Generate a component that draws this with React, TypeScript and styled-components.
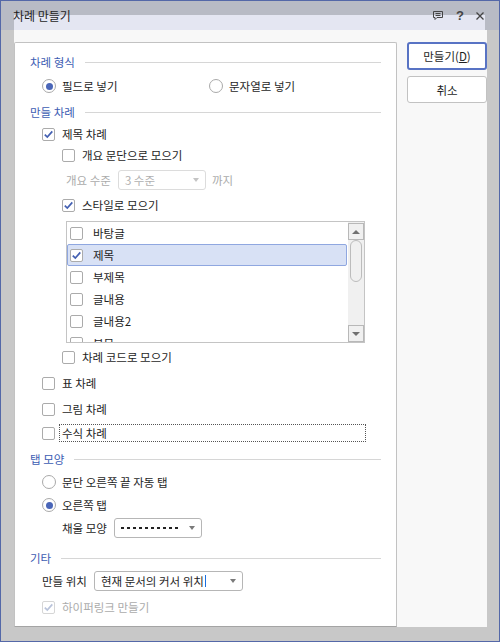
import React from 'react'
import styled, { createGlobalStyle } from 'styled-components'

const GlobalStyle = createGlobalStyle`
  html, body {
    margin: 0;
    padding: 0;
    background: #ffffff;
  }
  body {
    font-family: 'Noto Sans CJK KR', 'Noto Sans', sans-serif;
    font-size: 11.5px;
    color: #1e1e1e;
  }
  * {
    box-sizing: border-box;
  }
`

const Window = styled.div`
  width: 500px;
  height: 642px;
  border: 1px solid #5468a8;
  background: #c8c8c8;
  display: flex;
  flex-direction: column;
`

const TitleBar = styled.div`
  height: 29px;
  flex: none;
  display: flex;
  align-items: center;
  padding: 0 15px 0 12px;
  background:
    linear-gradient(#e4e6f2, #e4e6f2) 13px 14px / 471px 15px no-repeat,
    #b8bbc5;
`

const Title = styled.div`
  flex: 1;
  font-size: 12px;
  color: #1e1e1e;
`

const TitleControls = styled.div`
  display: flex;
  align-items: center;
  gap: 12px;
  color: #444;
`

const HelpMark = styled.span`
  font-family: 'Liberation Sans', sans-serif;
  font-weight: bold;
  font-size: 13px;
  line-height: 1;
`

const Frame = styled.div`
  flex: 1;
  display: flex;
  padding: 0 14px 14px 13px;
`

const Body = styled.div`
  flex: 1;
  display: flex;
  padding-top: 12px;
  background: #f8f8f8;
`

const Panel = styled.div`
  width: 383px;
  flex: none;
  background: #ffffff;
  border: 1px solid #c2c2c2;
  border-bottom-color: #a4a4a4;
  border-radius: 2px 2px 0 0;
  padding: 9px 15px 0 15px;
`

const ButtonColumn = styled.div`
  width: 80px;
  flex: none;
  margin-left: 10px;
  display: flex;
  flex-direction: column;
  gap: 6px;
`

const DialogButton = styled.button<{ $primary?: boolean }>`
  width: 80px;
  height: ${p => (p.$primary ? 28 : 27)}px;
  border: ${p => (p.$primary ? '2px solid #5873c4' : '1px solid #c2c2c2')};
  border-radius: 3px;
  background: #ffffff;
  font-family: inherit;
  font-size: 11.5px;
  color: #1e1e1e;
  padding: 0;
`

const SectionHeader = styled.div<{ $mt?: number }>`
  display: flex;
  align-items: center;
  gap: 10px;
  height: 20px;
  margin-top: ${p => p.$mt ?? 0}px;
  color: #3d5db3;
  &::after {
    content: '';
    flex: 1;
    height: 1px;
    background: #d6d6d6;
  }
`

const Row = styled.div<{ $indent: number; $mt: number }>`
  display: flex;
  align-items: center;
  height: 20px;
  margin-left: ${p => p.$indent}px;
  margin-top: ${p => p.$mt}px;
`

const Box = styled.span<{ $disabled?: boolean; $gap?: number }>`
  width: 13px;
  height: 13px;
  flex: none;
  border: 1px solid ${p => (p.$disabled ? '#d6d6d6' : '#ababab')};
  border-radius: 2px;
  background: #ffffff;
  display: inline-flex;
  align-items: center;
  justify-content: center;
  margin-right: ${p => p.$gap ?? 7}px;
`

const RadioCircle = styled.span<{ $on?: boolean }>`
  width: 14px;
  height: 14px;
  flex: none;
  border-radius: 50%;
  border: 1px solid #a9a9a9;
  background: #ffffff;
  display: inline-flex;
  align-items: center;
  justify-content: center;
  margin-right: 6px;
  &::after {
    content: '';
    width: 7px;
    height: 7px;
    border-radius: 50%;
    background: ${p => (p.$on ? '#4a66b8' : 'transparent')};
  }
`

const RadioOption = styled.label<{ $width?: number }>`
  display: flex;
  align-items: center;
  width: ${p => (p.$width ? `${p.$width}px` : 'auto')};
`

const Text = styled.span<{ $disabled?: boolean }>`
  color: ${p => (p.$disabled ? '#ababab' : '#1e1e1e')};
  white-space: nowrap;
`

const FocusLabel = styled.span`
  width: 307px;
  height: 18px;
  display: flex;
  align-items: center;
  padding-left: 2px;
  border: 1px dotted #555555;
`

const Combo = styled.div<{ $width: number; $disabled?: boolean }>`
  width: ${p => p.$width}px;
  height: 20px;
  flex: none;
  display: flex;
  align-items: center;
  padding: 0 6px 0 6px;
  margin: 0 6px 0 7px;
  border: 1px solid ${p => (p.$disabled ? '#dcdcdc' : '#b6b6b6')};
  border-radius: 3px;
  background: #ffffff;
  color: ${p => (p.$disabled ? '#b0b0b0' : '#1e1e1e')};
`

const ComboValue = styled.span`
  flex: 1;
  display: flex;
  align-items: center;
  white-space: nowrap;
`

const ComboArrow = styled.span<{ $disabled?: boolean }>`
  width: 0;
  height: 0;
  border-left: 3.5px solid transparent;
  border-right: 3.5px solid transparent;
  border-top: 4px solid ${p => (p.$disabled ? '#c4c4c4' : '#7a7a7a')};
`

const DashLine = styled.span`
  width: 60px;
  height: 2px;
  background: repeating-linear-gradient(90deg, #222 0 3px, transparent 3px 6px);
`

const Caret = styled.span`
  width: 1px;
  height: 12px;
  margin-left: 1px;
  background: #1a6fe0;
`

const ListBox = styled.div`
  margin: 6px 0 0 36px;
  width: 299px;
  height: 122px;
  border: 1px solid #c4c4c4;
  background: #ffffff;
  display: flex;
  overflow: hidden;
`

const ListItems = styled.div`
  flex: 1;
  display: flex;
  flex-direction: column;
  margin-right: 1px;
`

const ListItem = styled.div<{ $selected?: boolean }>`
  height: 22px;
  flex: none;
  display: flex;
  align-items: center;
  padding-left: 2px;
  border: 1px solid ${p => (p.$selected ? '#8fa7e0' : 'transparent')};
  border-radius: 2px;
  background: ${p => (p.$selected ? '#d8e1f5' : 'transparent')};
`

const ScrollBar = styled.div`
  width: 16px;
  flex: none;
  display: flex;
  flex-direction: column;
  padding-top: 1px;
  background: #f0f0f0;
`

const ScrollButton = styled.div`
  height: 17px;
  flex: none;
  border: 1px solid #b8b8b8;
  background: #f0f0f0;
  display: flex;
  align-items: center;
  justify-content: center;
`

const ScrollThumb = styled.div`
  height: 42px;
  margin: 0 2px;
  border: 1px solid #bcbcbc;
  border-radius: 6px;
  background: #f0f0f0;
`

const ScrollSpace = styled.div`
  flex: 1;
`

const Triangle = styled.span<{ $up?: boolean }>`
  width: 0;
  height: 0;
  border-left: 4px solid transparent;
  border-right: 4px solid transparent;
  ${p => (p.$up ? 'border-bottom: 4px solid #707070;' : 'border-top: 4px solid #707070;')}
`

function Check({ disabled }: { disabled?: boolean }) {
  return (
    <svg width="11" height="11" viewBox="0 0 11 11">
      <path
        d="M1.8 5.6 L4.3 8.1 L9.3 2.4"
        fill="none"
        stroke={disabled ? '#b9c3da' : '#4460b2'}
        strokeWidth="1.7"
      />
    </svg>
  )
}

function CheckBox({ checked, disabled, gap }: { checked?: boolean; disabled?: boolean; gap?: number }) {
  return (
    <Box $disabled={disabled} $gap={gap}>
      {checked && <Check disabled={disabled} />}
    </Box>
  )
}

function MessageIcon() {
  return (
    <svg width="12" height="11" viewBox="0 0 12 11">
      <path d="M1.5 1.5 H10.5 V7.5 H5 L3 9.5 V7.5 H1.5 Z" fill="none" stroke="#444" strokeWidth="1" />
      <path d="M3.5 3.5 H8.5 M3.5 5.5 H8.5" stroke="#444" strokeWidth="1" />
    </svg>
  )
}

function CloseIcon() {
  return (
    <svg width="8" height="8" viewBox="0 0 8 8">
      <path d="M0.5 0.5 L7.5 7.5 M7.5 0.5 L0.5 7.5" stroke="#444" strokeWidth="1.3" />
    </svg>
  )
}

const STYLE_ITEMS = ['바탕글', '제목', '부제목', '글내용', '글내용2', '본문']

export default function App() {
  return (
    <>
      <GlobalStyle />
      <Window>
        <TitleBar>
          <Title>차례 만들기</Title>
          <TitleControls>
            <MessageIcon />
            <HelpMark>?</HelpMark>
            <CloseIcon />
          </TitleControls>
        </TitleBar>
        <Frame>
          <Body>
            <Panel>
              <SectionHeader>차례 형식</SectionHeader>
              <Row $indent={12} $mt={4}>
                <RadioOption $width={167}>
                  <RadioCircle $on />
                  <Text>필드로 넣기</Text>
                </RadioOption>
                <RadioOption>
                  <RadioCircle />
                  <Text>문자열로 넣기</Text>
                </RadioOption>
              </Row>

              <SectionHeader $mt={6}>만들 차례</SectionHeader>
              <Row $indent={12} $mt={2}>
                <CheckBox checked />
                <Text>제목 차례</Text>
              </Row>
              <Row $indent={32} $mt={1}>
                <CheckBox />
                <Text>개요 문단으로 모으기</Text>
              </Row>
              <Row $indent={36} $mt={5}>
                <Text $disabled>개요 수준</Text>
                <Combo $width={88} $disabled>
                  <ComboValue>3 수준</ComboValue>
                  <ComboArrow $disabled />
                </Combo>
                <Text $disabled>까지</Text>
              </Row>
              <Row $indent={32} $mt={5}>
                <CheckBox checked />
                <Text>스타일로 모으기</Text>
              </Row>
              <ListBox>
                <ListItems>
                  {STYLE_ITEMS.map(item => (
                    <ListItem key={item} $selected={item === '제목'}>
                      <CheckBox checked={item === '제목'} gap={10} />
                      <Text>{item}</Text>
                    </ListItem>
                  ))}
                </ListItems>
                <ScrollBar>
                  <ScrollButton>
                    <Triangle $up />
                  </ScrollButton>
                  <ScrollThumb />
                  <ScrollSpace />
                  <ScrollButton>
                    <Triangle />
                  </ScrollButton>
                </ScrollBar>
              </ListBox>
              <Row $indent={32} $mt={4}>
                <CheckBox />
                <Text>차례 코드로 모으기</Text>
              </Row>
              <Row $indent={12} $mt={6}>
                <CheckBox />
                <Text>표 차례</Text>
              </Row>
              <Row $indent={12} $mt={6}>
                <CheckBox />
                <Text>그림 차례</Text>
              </Row>
              <Row $indent={12} $mt={4}>
                <CheckBox gap={4} />
                <FocusLabel>수식 차례</FocusLabel>
              </Row>

              <SectionHeader $mt={6}>탭 모양</SectionHeader>
              <Row $indent={12} $mt={3}>
                <RadioOption>
                  <RadioCircle />
                  <Text>문단 오른쪽 끝 자동 탭</Text>
                </RadioOption>
              </Row>
              <Row $indent={12} $mt={3}>
                <RadioOption>
                  <RadioCircle $on />
                  <Text>오른쪽 탭</Text>
                </RadioOption>
              </Row>
              <Row $indent={32} $mt={3}>
                <Text>채울 모양</Text>
                <Combo $width={88}>
                  <ComboValue>
                    <DashLine />
                  </ComboValue>
                  <ComboArrow />
                </Combo>
              </Row>

              <SectionHeader $mt={10}>기타</SectionHeader>
              <Row $indent={12} $mt={3}>
                <Text>만들 위치</Text>
                <Combo $width={149}>
                  <ComboValue>
                    현재 문서의 커서 위치
                    <Caret />
                  </ComboValue>
                  <ComboArrow />
                </Combo>
              </Row>
              <Row $indent={12} $mt={6}>
                <CheckBox checked disabled />
                <Text $disabled>하이퍼링크 만들기</Text>
              </Row>
            </Panel>
            <ButtonColumn>
              <DialogButton $primary>
                만들기(<u>D</u>)
              </DialogButton>
              <DialogButton>취소</DialogButton>
            </ButtonColumn>
          </Body>
        </Frame>
      </Window>
    </>
  )
}
